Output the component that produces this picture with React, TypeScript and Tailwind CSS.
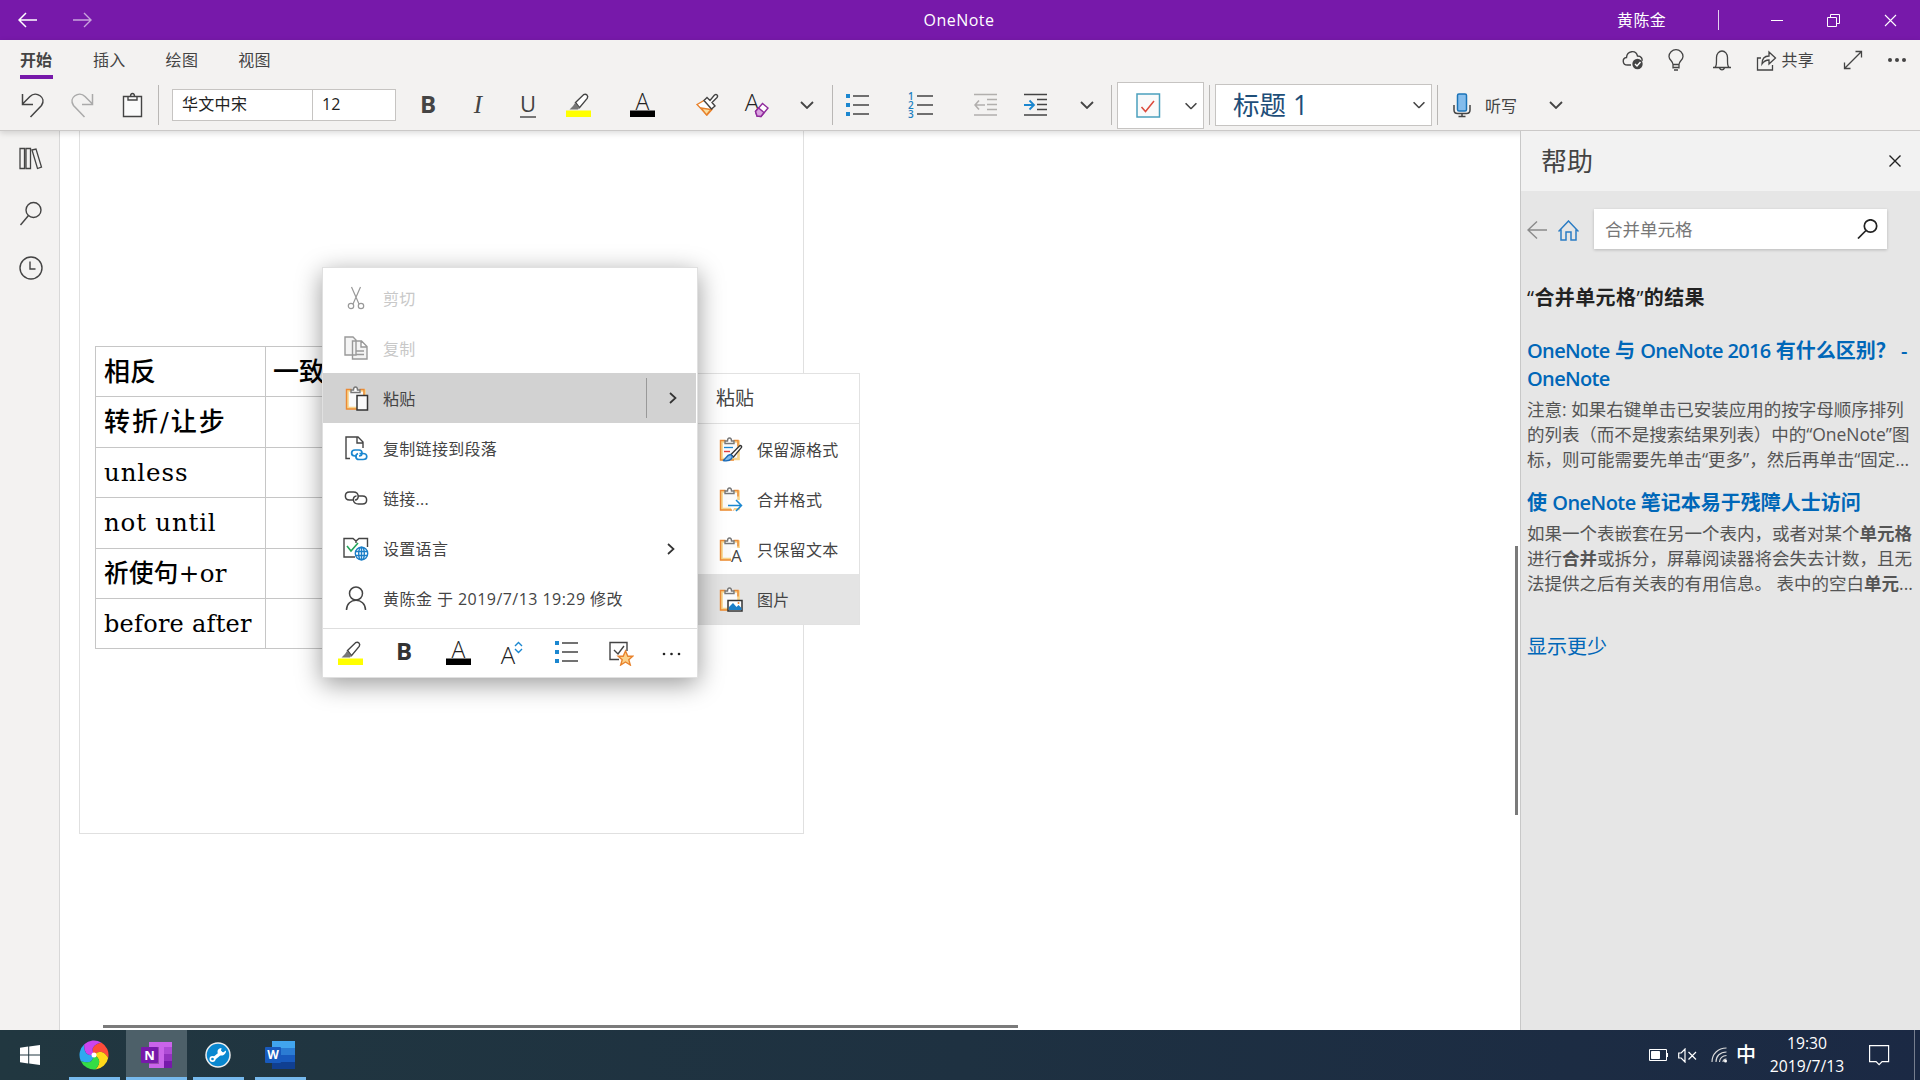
import React from 'react';

const clip = 'M6.5 4.5H2.5V22H19.5V4.5H15.5';

function Chevron({ className = 'text-[#3b3a39]' }: { className?: string }) {
  return (
    <svg className={`shrink-0 ${className}`} width="14" height="8" viewBox="0 0 14 8" fill="none" stroke="currentColor" strokeWidth="1.8">
      <path d="M1 1l6 6 6-6" />
    </svg>
  );
}

function ChevronRight() {
  return (
    <svg width="8" height="12" viewBox="0 0 8 12" fill="none" stroke="#333" strokeWidth="1.7">
      <path d="M1 1l5.5 5L1 11" />
    </svg>
  );
}

function Divider({ className }: { className: string }) {
  return <div className={`w-px h-10 shrink-0 bg-[#b9b7b5] ${className}`} />;
}

function Highlighter() {
  return (
    <svg width="26" height="26" viewBox="0 0 26 26" fill="none">
      <path d="M0 18.5h25v6.5H0z" fill="#ffff00" />
      <path d="M9.5 10.5L17.5 2.7c2.7-1.5 5.3 1 3.7 3.7l-7.7 9.2z" fill="#fff" stroke="#444" strokeWidth="1.4" />
      <path d="M9 11l4.5 4.5-1.5 2H3.5L7 14z" fill="#777" />
    </svg>
  );
}

function FontColor() {
  return (
    <svg className="overflow-visible" width="26" height="26" viewBox="0 0 26 26">
      <text x="12.5" y="17.5" textAnchor="middle" fontSize="23" fontWeight="300" fontFamily="Open Sans, sans-serif" fill="#222">A</text>
      <path d="M0 18.5h25V25H0z" fill="#000" />
    </svg>
  );
}

function Bullets() {
  return (
    <svg width="24" height="24" viewBox="0 0 24 24">
      <path d="M1 1h4v4H1zM1 10h4v4H1zM1 19h4v4H1z" fill="#1b87d0" />
      <path d="M8 3h16M8 12h16M8 21h16" stroke="#444" strokeWidth="1.4" />
    </svg>
  );
}

function Indent({ disabled }: { disabled?: boolean }) {
  const c = disabled ? '#b1afad' : '#444';
  return (
    <svg width="24" height="24" viewBox="0 0 24 24" fill="none" stroke={c} strokeWidth="1.6">
      <path d="M0 1.5h23M13 6.5h10M13 11.5h10M13 16.5h10M0 22h23" />
      {disabled ? <path d="M11 12H1M5 7.5L1 12l4 4.5" /> : <path d="M0 12h10M5.5 7.5L10 12l-4.5 4.5" stroke="#1b87d0" strokeWidth="1.8" />}
    </svg>
  );
}

function Clipboard({ children }: { children?: React.ReactNode }) {
  return (
    <svg className="overflow-visible" width="24" height="25" viewBox="0 0 24 25" fill="none">
      <path d="M2 3.5h17V23H2z" fill="#fafafa" />
      <path d={clip} stroke="#f8d48a" strokeWidth="2.6" />
      <path d="M6.5 3.5H1.5V23H15M14.5 3.5H19v6" stroke="#eb8a35" strokeWidth="1.4" />
      <path d="M6 6.5V4h2.5c0-4 4-4 4 0H15v2.5z" fill="#fff" stroke="#777" strokeWidth="1.4" />
      {children}
    </svg>
  );
}

function TitleBar() {
  return (
    <div className="h-10 shrink-0 bg-[#7719aa] text-white grid grid-cols-[1fr_auto_1fr] items-center text-[16px]">
      <div className="flex items-center pl-[18px]">
        <svg width="20" height="16" viewBox="0 0 20 16" fill="none" stroke="white" strokeWidth="1.5"><path d="M19 8H1M8 1L1 8l7 7" /></svg>
        <svg className="ml-[34px] opacity-60" width="20" height="16" viewBox="0 0 20 16" fill="none" stroke="white" strokeWidth="1.4"><path d="M1 8h18M12 1l7 7-7 7" /></svg>
      </div>
      <span className="tracking-[0.5px] pr-[2px]">OneNote</span>
      <div className="flex items-center justify-end pr-[23px]">
        <span className="mr-[52px] tracking-[0.3px]">黄陈金</span>
        <div className="w-px h-5 bg-white/80 mr-[52px]" />
        <div className="w-3 h-px bg-white mr-[44px]" />
        <svg className="mr-[44px]" width="13" height="13" viewBox="0 0 13 13" fill="none" stroke="white"><path d="M.5 3.5h9v9h-9zM3.5 3V.5h9v9H10" /></svg>
        <svg width="13" height="13" viewBox="0 0 13 13" fill="none" stroke="white" strokeWidth="1.1"><path d="M1 1l11 11M12 1L1 12" /></svg>
      </div>
    </div>
  );
}

function Tabs() {
  return (
    <div className="h-10 shrink-0 flex items-center text-[16px] text-[#444] pl-5">
      <div className="h-[39px] w-[33px] self-start border-b-4 border-[#7719aa] flex items-center justify-center font-bold pt-1 pr-px whitespace-nowrap">开始</div>
      <span className="ml-10 tracking-[0.3px]">插入</span>
      <span className="ml-10 tracking-[0.3px]">绘图</span>
      <span className="ml-10 tracking-[0.3px]">视图</span>
      <div className="ml-auto flex items-center pr-[13px]">
        <svg width="22" height="20" viewBox="0 0 22 20" fill="none" stroke="#444" strokeWidth="1.4">
          <path d="M9 15H5.500C0 15 0 8 4.500 7.500 5 .5 14 -.5 15.500 6c4 0 5 3 4.500 5" />
          <circle cx="15.5" cy="14" r="5.2" fill="#444" stroke="none" />
          <path d="M13 14l2 2 3.500-4" stroke="#fff" />
        </svg>
        <svg className="ml-[23px]" width="18" height="22" viewBox="0 0 18 22" fill="none" stroke="#444" strokeWidth="1.3">
          <path d="M6 15.500C6 12 2 11 2 7.500a7 6.800 0 0 1 14 0C16 11 12 12 12 15.500zM6 18.500h6M7 21h4M6 15.500v4M12 15.500v4" />
        </svg>
        <svg className="ml-[27px]" width="20" height="22" viewBox="0 0 20 22" fill="none" stroke="#444" strokeWidth="1.3">
          <path d="M1 18.500h18M3 18.500c1.500-2 1.500-3 1.500-10a5.500 6.500 0 0 1 11 0c0 7 0 8 1.500 10M7.500 19c1 2.500 4 2.500 5 0" />
        </svg>
        <svg className="ml-6" width="21" height="21" viewBox="0 0 21 21" fill="none" stroke="#444" strokeWidth="1.3">
          <path d="M5 8H1.500v12h15v-5M6 14c0-6 3-8 7-8V2l6.500 6-6.500 6v-4c-3 0-5 1-7 4z" />
        </svg>
        <span className="ml-1 tracking-[0.3px]">共享</span>
        <svg className="ml-[29px]" width="20" height="20" viewBox="0 0 20 20" fill="none" stroke="#444" strokeWidth="1.3">
          <path d="M1.500 18.500l17-17M12.500 1.500h6v6M1.500 12.500v6h6" />
        </svg>
        <svg className="ml-6" width="20" height="6" viewBox="0 0 20 6" fill="#444"><circle cx="3" cy="3" r="2" /><circle cx="10" cy="3" r="2" /><circle cx="17" cy="3" r="2" /></svg>
      </div>
    </div>
  );
}

function Toolbar() {
  return (
    <div className="h-[50px] shrink-0 flex items-center text-[16px] text-[#444]">
      <svg className="ml-[21px]" width="24" height="26" viewBox="0 0 24 26" fill="none" stroke="#444" strokeWidth="1.5"><path d="M1.500 2v10.500H12M1.500 12L9 4.500c6-6 17 1 11.500 9L9.500 25" /></svg>
      <svg className="ml-[25px]" width="24" height="26" viewBox="0 0 24 26" fill="none" stroke="#aaa" strokeWidth="1.5"><path d="M22.500 2v10.500H12M22.500 12L15 4.500c-6-6-17 1-11.500 9L14.500 25" /></svg>
      <svg className="ml-[27px]" width="24" height="26" viewBox="0 0 24 26" fill="#fafafa" stroke="#444" strokeWidth="1.4"><path d="M2.500 4.500h18v20h-18zM7 8V4.500h2.500c0-4 4-4 4 0H16V8z" /></svg>
      <Divider className="ml-[13px]" />
      <div className="ml-[13px] w-[224px] h-8 shrink-0 flex bg-white border border-[#c6c4c2] text-[#222] leading-[29px]">
        <div className="w-[140px] border-r border-[#c6c4c2] pl-[9px] tracking-[0.3px]">华文中宋</div>
        <div className="pl-[9px]">12</div>
      </div>
      <span className="ml-5 w-6 text-center text-[24px] font-bold leading-6 pb-0.5">B</span>
      <span className="ml-[26px] w-6 text-center text-[25px] italic leading-6 font-['Liberation_Serif',serif]">I</span>
      <span className="ml-[26px] w-6 flex justify-center"><span className="w-4 h-[25px] border-b-2 border-[#777] text-center text-[22px] leading-[20px] mt-px">U</span></span>
      <div className="ml-[26px] w-[26px]"><Highlighter /></div>
      <div className="ml-[38px] w-[26px]"><FontColor /></div>
      <svg className="ml-[39px]" width="24" height="24" viewBox="0 0 24 24" fill="none" strokeWidth="1.4">
        <path d="M2 11.500l8-4.500 7 9.500-5 5.500z" fill="#fff" stroke="#e8822c" />
        <path d="M6 15l10 1.500-4.500 5.500z" fill="#fbdf9f" stroke="#e8822c" />
        <path d="M9 7.500l3-3 3 3 4.500-5.500c2-1.500 4 .5 2.500 2.500L17 9.500l3 3.500-3.500 3z" fill="#fff" stroke="#444" />
      </svg>
      <svg className="ml-[25px] overflow-visible" width="26" height="26" viewBox="0 0 26 26" fill="none">
        <text x="8" y="18.500" textAnchor="middle" fontSize="24" fontWeight="300" fontFamily="Open Sans, sans-serif" fill="#222">A</text>
        <path d="M11.500 19.500l7-8 5.500 4.500-7 8.500-4-.5z" fill="#fff" stroke="#8f2a9c" strokeWidth="1.4" />
        <path d="M11.500 19.500l3-3.500 5.500 4.500-3 4-4-.5z" fill="#d9a3df" stroke="#8f2a9c" strokeWidth="1.4" />
      </svg>
      <Chevron className="ml-[30px]" />
      <Divider className="ml-[18px]" />
      <div className="ml-3 w-6"><Bullets /></div>
      <div className="ml-[39px] w-[26px] flex items-center">
        <div className="w-[9px] text-[10px] leading-[9px] font-semibold text-[#1b7fc0]">
          <div>1</div>
          <div>2</div>
          <div>3</div>
        </div>
        <svg width="17" height="24" viewBox="0 0 17 24"><path d="M0 3h16M0 12h16M0 21h16" stroke="#444" strokeWidth="1.4" /></svg>
      </div>
      <div className="ml-10 w-6"><Indent disabled /></div>
      <div className="ml-[26px] w-6"><Indent /></div>
      <Chevron className="ml-8" />
      <Divider className="ml-[17px]" />
      <div className="ml-[5px] w-[87px] h-[47px] shrink-0 bg-white border border-[#c6c4c2] flex items-center pl-[18px]">
        <svg width="25" height="25" viewBox="0 0 25 25" fill="none"><path d="M1 1h22.500v23H1z" fill="#fafafa" stroke="#4ba0bd" strokeWidth="1.5" /><path d="M5.500 14l4 4.500 8.500-10.500" stroke="#dc4a3c" strokeWidth="1.5" /></svg>
        <Chevron className="ml-[23px] mt-0.5 scale-90" />
      </div>
      <Divider className="ml-[5px]" />
      <div className="ml-[5px] w-[217px] h-[42px] shrink-0 bg-white border border-[#c6c4c2] flex items-center justify-between pl-[17px] pr-[5px] text-[#1e4e79]">
        <span className="text-[26.5px] leading-none">标题 1</span>
        <Chevron className="scale-90 text-[#444]" />
      </div>
      <Divider className="ml-[5px]" />
      <svg className="ml-[14px]" width="20" height="26" viewBox="0 0 20 26" fill="none">
        <rect x="5.5" y="2" width="9" height="17" rx="1.5" fill="#83bcec" stroke="#1a73b8" strokeWidth="1.5" />
        <path d="M2 13v5c0 2 1 3.500 3.500 3.500h9c2.500 0 3.500-1.500 3.500-3.500v-5M10 21.500V24M6.500 24.500h7" stroke="#444" strokeWidth="1.5" />
      </svg>
      <span className="ml-[13px] pt-px">听写</span>
      <Chevron className="ml-8" />
    </div>
  );
}

function Sidebar() {
  return (
    <div className="w-[60px] shrink-0 bg-[#f3f2f1] border-r border-[#d8d8d8] flex flex-col items-center pt-4 pl-[2px] gap-[30px]">
      <svg width="24" height="24" viewBox="0 0 24 24" fill="none" stroke="#444" strokeWidth="1.3"><path d="M1 1.500h4.500v20H1zM7 1.500h4.500v20H7zM13 3l4-1 5.500 18-4 1.500z" /></svg>
      <svg width="24" height="25" viewBox="0 0 24 25" fill="none" stroke="#444" strokeWidth="1.4"><circle cx="14.5" cy="9" r="7.5" /><path d="M9.500 14.500L1.500 24" /></svg>
      <svg width="24" height="24" viewBox="0 0 24 24" fill="none" stroke="#444" strokeWidth="1.4"><circle cx="12" cy="12" r="11" /><path d="M11 5.500v7.500h5.500" /></svg>
    </div>
  );
}

const rows = [
  { text: '相反', size: 'text-[26px] font-medium' },
  { text: '转折/让步', size: 'text-[26px] font-medium tracking-[2px]' },
  { text: 'unless', size: 'text-[24.5px] tracking-[0.9px]' },
  { text: 'not until', size: 'text-[24.5px] tracking-[0.8px]' },
  { text: '祈使句+or', size: 'text-[24.5px] font-medium tracking-[0.4px]' },
  { text: 'before after', size: 'text-[24px] tracking-[0.25px]' },
];

function NoteTable() {
  return (
    <div className="ml-[15px] w-[320px] border-t border-l border-[#c6c6c6] text-black font-['DejaVu_Serif','Noto_Sans_CJK_SC',serif]">
      {rows.map((row, i) => (
        <div key={row.text} className={`flex h-[50.4px] border-b border-[#c6c6c6] leading-[50px] ${row.size}`}>
          <div className="w-[170px] border-r border-[#c6c6c6] pl-2 whitespace-nowrap">{row.text}</div>
          <div className="pl-[7px]">{i === 0 ? '一致' : ''}</div>
        </div>
      ))}
    </div>
  );
}

interface ItemProps {
  icon: React.ReactNode;
  label: string;
  className?: string;
  children?: React.ReactNode;
}

function MenuItem({ icon, label, className = 'text-[#444] tracking-[0.3px]', children }: ItemProps) {
  return (
    <div className={`h-[50px] flex items-center pl-5 ${className}`}>
      <div className="w-[26px] flex justify-center">{icon}</div>
      <span className="ml-[14px] pt-[2px]">{label}</span>
      {children}
    </div>
  );
}

function ContextMenu() {
  return (
    <div className="absolute left-[262px] top-[136px] w-[376px] h-[411px] z-20 bg-white border border-[#e0e0e0] pt-[5px] text-[16px] shadow-[0_6px_24px_rgba(0,0,0,0.4)]">
      <MenuItem label="剪切" className="text-[#c8c8c8] tracking-[0.3px]" icon={
        <svg width="20" height="24" viewBox="0 0 20 24" fill="none" stroke="#999" strokeWidth="1.2"><path d="M5.500 1l7.500 17M14.500 1L7 18" /><circle cx="5" cy="20" r="2.7" /><circle cx="15" cy="20" r="2.7" /></svg>
      } />
      <MenuItem label="复制" className="text-[#c8c8c8] tracking-[0.3px]" icon={
        <svg width="24" height="24" viewBox="0 0 24 24" fill="#f4f4f4" stroke="#999" strokeWidth="1.4"><path d="M1 1h8l3 3v15H1zM8.500 5h9l5.500 5.500V23H8.500zM17 5v6h6M12 15h8M12 18.500h8" /></svg>
      } />
      <MenuItem label="粘贴" className="bg-[#d2d2d2] text-[#444] mr-px tracking-[0.3px]" icon={
        <div className="pt-px pl-0.5"><Clipboard><path d="M12 9.500h10.500V24H12z" fill="#fafafa" stroke="#333" strokeWidth="1.5" /></Clipboard></div>
      }>
        <div className="ml-auto w-px h-10 bg-[#999]" />
        <div className="w-[49px] flex justify-center pl-[3px]"><ChevronRight /></div>
      </MenuItem>
      <MenuItem label="复制链接到段落" icon={
        <svg className="mt-px" width="24" height="25" viewBox="0 0 24 25" fill="none" stroke="#444" strokeWidth="1.4">
          <path d="M6 22.500H2V1h12l5 5v6M13 1v6h6" />
          <path d="M13 20h-2c-4.500 0-4.500-6 0-6h4c4 0 4 6 0 6M15.500 17.500H19c5 0 5 6 0 6h-4c-4 0-4-5-1-6" stroke="#1b87d0" strokeWidth="1.7" />
        </svg>
      } />
      <MenuItem label="链接..." icon={
        <svg width="24" height="14" viewBox="0 0 24 14" fill="none" stroke="#444" strokeWidth="1.5"><path d="M9 9H5.500C0 9 0 1 5.500 1h4c6 0 6 8 1.500 8M14 5h4.500c5.500 0 5.500 8 0 8h-4C8 13 8 5 12.500 5" /></svg>
      } />
      <MenuItem label="设置语言" icon={
        <svg className="mt-px" width="26" height="24" viewBox="0 0 26 24" fill="none" stroke="#444" strokeWidth="1.4">
          <path d="M12 20H1V1.500h9l3 2.500 3-2.500h8.500V10M13 4v2" />
          <path d="M4 9l4 5 7-8" stroke="#24a55a" strokeWidth="1.6" />
          <circle cx="18.5" cy="16.5" r="6.2" fill="#fff" stroke="#1b7fc8" />
          <ellipse cx="18.5" cy="16.5" rx="2.8" ry="6.2" stroke="#1b7fc8" />
          <path d="M12.500 14.500h12M12.500 18.500h12M18.500 10v13" stroke="#1b7fc8" />
        </svg>
      }>
        <div className="ml-auto mr-[22px] pt-px"><ChevronRight /></div>
      </MenuItem>
      <MenuItem label="黄陈金 于 2019/7/13 19:29 修改" className="text-[#444] tracking-[0.45px]" icon={
        <svg width="22" height="24" viewBox="0 0 22 24" fill="none" stroke="#444" strokeWidth="1.5"><circle cx="11" cy="7.5" r="6.5" /><path d="M1.500 24c0-13 19-13 19 0" /></svg>
      } />
      <div className="h-[49px] border-t border-[#dedede] mt-[5px] flex items-center justify-between pl-[15px] pr-[16px]">
        <Highlighter />
        <span className="w-[26px] text-center text-[24px] font-bold leading-6 text-[#333] pb-1">B</span>
        <div className="ml-0.5"><FontColor /></div>
        <svg className="overflow-visible" width="26" height="26" viewBox="0 0 26 26" fill="none">
          <text x="9" y="23.5" textAnchor="middle" fontSize="24" fontWeight="300" fontFamily="Open Sans, sans-serif" fill="#222">A</text>
          <path d="M16 6l3.500-3.500L23 6M16 9l3.500 3.500L23 9" stroke="#1b87d0" strokeWidth="1.4" />
        </svg>
        <div className="pb-0.5 ml-0.5"><Bullets /></div>
        <svg className="ml-[3px]" width="26" height="25" viewBox="0 0 26 25" fill="none" stroke="#444" strokeWidth="1.4">
          <path d="M11 18.500H2V1.500h17V10M6 9l4 4 6-8" />
          <path d="M17.500 10l2.300 5.200h5l-4 3.500 1.500 5.300-4.800-3-4.800 3 1.500-5.300-4-3.500h5z" fill="#fbd28a" stroke="#e8822c" />
        </svg>
        <svg width="20" height="5" viewBox="0 0 20 5" fill="#222"><circle cx="3" cy="3" r="1.3" /><circle cx="10.5" cy="3" r="1.3" /><circle cx="18" cy="3" r="1.3" /></svg>
      </div>
    </div>
  );
}

function SubItem({ icon, label, className = '' }: ItemProps) {
  return (
    <div className={`h-[50px] flex items-center pl-[21px] tracking-[0.3px] ${className}`}>
      {icon}
      <span className="ml-[14px] pt-px">{label}</span>
    </div>
  );
}

function PasteMenu() {
  return (
    <div className="absolute left-[638px] top-[242px] w-[162px] h-[252px] z-10 bg-white border border-l-0 border-[#e2e2e2] text-[16px] text-[#444]">
      <div className="h-[50px] border-b border-[#e2e2e2] pl-[18px] text-[19px] leading-[49px]">粘贴</div>
      <SubItem label="保留源格式" icon={
        <Clipboard>
          <path d="M5 10.500h9" stroke="#1b87d0" strokeWidth="1.3" /><path d="M5 14.500h6" stroke="#e03c3c" strokeWidth="1.4" />
          <path d="M12 17.500L21 8.500c1.500 0 2 1 1.500 2L14.500 20z" fill="#fff" stroke="#333" strokeWidth="1.3" />
          <path d="M4 23.500c3-1 3-5.500 7.500-6 4 2 1 7.500-7.500 6z" fill="#83bcec" stroke="#1a6bb8" strokeWidth="1.3" />
        </Clipboard>
      } />
      <SubItem label="合并格式" icon={
        <Clipboard><path d="M8 13h15v8h-8l-1 4" fill="#fff" /><path d="M9 18.500h13M17 13l5.500 5.500-5.500 5.500" stroke="#1b87d0" strokeWidth="1.5" /></Clipboard>
      } />
      <SubItem label="只保留文本" icon={
        <Clipboard><path d="M12 11h11v14H12z" fill="#fff" /><text x="17.5" y="24.500" textAnchor="middle" fontSize="17" fontFamily="Open Sans, sans-serif" fill="#444">A</text></Clipboard>
      } />
      <SubItem label="图片" className="bg-[#e4e4e4]" icon={
        <Clipboard>
          <path d="M9 13.500h14V24H9z" fill="#fff" stroke="#333" strokeWidth="1.5" />
          <path d="M10 23v-3l4-4 3.500 4 2-2 3 3v2z" fill="#1b7fc8" /><circle cx="19.500" cy="16" r="1" fill="#e8822c" />
        </Clipboard>
      } />
    </div>
  );
}

function HelpPane() {
  return (
    <div className="w-[400px] shrink-0 z-20 bg-[#e6e6e6] border-l border-[#c8c8c8] flex flex-col whitespace-nowrap">
      <div className="h-[60px] bg-[#f2f2f2] flex items-center justify-between pl-5 pr-[19px]">
        <span className="text-[26px] text-[#444] pt-px">帮助</span>
        <svg width="12" height="12" viewBox="0 0 12 12" stroke="#222" strokeWidth="1.4"><path d="M.5.5l11 11M11.500.5l-11 11" /></svg>
      </div>
      <div className="mt-[18px] flex items-center pl-[6px]">
        <svg className="mt-0.5" width="21" height="18" viewBox="0 0 21 18" fill="none" stroke="#8a8a8a" strokeWidth="1.4"><path d="M20 9H1M10 .5L1 9l9 8.500" /></svg>
        <svg className="ml-[10px] mt-[3px]" width="21" height="21" viewBox="0 0 21 21" fill="none" stroke="#2b7cc4" strokeWidth="1.5"><path d="M.5 11.500l10-10.500 10 10.500M3 9.500v10.500h5v-8h5v8h5V9.500" /></svg>
        <div className="ml-[15px] w-[293px] h-10 bg-white shadow-[0_1px_3px_rgba(0,0,0,0.2)] flex items-center justify-between pl-[11px] pr-[9px] text-[17.5px] text-[#777]">
          合并单元格
          <svg width="21" height="20" viewBox="0 0 21 20" fill="none" stroke="#222" strokeWidth="1.7"><circle cx="13.500" cy="7" r="6.200" /><path d="M9 11.500L1 19.500" /></svg>
        </div>
      </div>
      <div className="pl-[6px] mt-[35px]">
        <h2 className="text-[20px] leading-7 font-bold text-[#222] tracking-[0.4px]"><span className="font-normal">“</span>合并单元格<span className="font-normal">”</span>的结果</h2>
        <div className="mt-[25px] text-[20px] leading-7 font-semibold text-[#0067b8]">
          <div><span className="tracking-[-0.65px]">OneNote</span> <b className="font-bold">与</b> <span className="tracking-[-0.65px]">OneNote 2016</span> <b className="font-bold">有什么区别？</b> -</div>
          <div className="tracking-[-0.65px]">OneNote</div>
        </div>
        <div className="mt-1 text-[17.5px] leading-[25px] text-[#555]">
          <div>注意: 如果右键单击已安装应用的按字母顺序排列</div>
          <div className="tracking-[-0.05px]">的列表（而不是搜索结果列表）中的“OneNote”图</div>
          <div>标，则可能需要先单击“更多”，然后再单击“固定...</div>
        </div>
        <div className="mt-[17px] text-[20px] leading-7 font-semibold text-[#0067b8]"><b className="font-bold">使</b> <span className="tracking-[-0.55px]">OneNote</span> <b className="font-bold">笔记本易于残障人士访问</b></div>
        <div className="mt-1 text-[17.5px] leading-[25px] text-[#555]">
          <div>如果一个表嵌套在另一个表内，或者对某个<b className="font-bold">单元格</b></div>
          <div>进行<b className="font-bold">合并</b>或拆分，屏幕阅读器将会失去计数，且无</div>
          <div>法提供之后有关表的有用信息。 表中的空白<b className="font-bold">单元</b>...</div>
        </div>
        <div className="mt-[37px] text-[20px] leading-7 text-[#0067b8]">显示更少</div>
      </div>
    </div>
  );
}

const blades = ['#ff4b3a', '#ffd91a', '#35dc45', '#2fa8f0', '#cc44f0'];

function Taskbar() {
  return (
    <div className="h-[50px] shrink-0 z-30 flex items-center bg-linear-to-r from-[#213740] via-[#1e3141] to-[#1b2944] text-white">
      <svg className="ml-5" width="20" height="20" viewBox="0 0 20 20" fill="#fff"><path d="M0 2.800L8.200 1.600v7.900H0zM9.200 1.500L20 0v9.500H9.200zM0 10.500h8.200v7.900L0 17.200zM9.200 10.500H20V20L9.200 18.500z" /></svg>
      <div className="ml-[29px] w-[51px] h-full border-b-[3px] border-[#76b9ed] flex justify-center pt-[10px] pr-[2px]">
        <svg width="30" height="30" viewBox="-15 -15 30 30">
          {blades.map((c, i) => (
            <path key={c} d="M0 0Q6-9 14.500 0A14.500 14.500 0 0 1 4.480 13.790Q10.400 2.920 0 0z" fill={c} transform={`rotate(${i * 72 - 60})`} />
          ))}
          <circle r="2.5" fill="#fff" />
        </svg>
      </div>
      <div className="ml-[6px] w-[61px] h-full bg-[#4d6069] border-b-[3px] border-[#76b9ed] flex justify-center pt-[11px] pr-px">
        <svg width="31" height="28" viewBox="0 0 31 28">
          <path d="M8 1h23v26H8z" fill="#ca64ea" /><path d="M23 6h8v7h-8z" fill="#ae4bd5" /><path d="M23 13h8v7h-8z" fill="#9332bf" /><path d="M23 20h8v7h-8z" fill="#7719aa" />
          <path d="M8 6h10v17H8z" fill="#000" opacity=".25" /><rect y="6" width="17" height="16" rx="1" fill="#7719aa" />
          <text x="8.500" y="18.500" textAnchor="middle" fontSize="13" fontWeight="700" fontFamily="Open Sans, sans-serif" fill="#fff">N</text>
        </svg>
      </div>
      <div className="ml-[6px] w-[51px] h-full border-b-[3px] border-[#76b9ed] flex justify-center pt-3 pr-px">
        <svg width="26" height="26" viewBox="0 0 26 26">
          <circle cx="13" cy="13" r="12" fill="#0a88d0" stroke="#eee" strokeWidth="1.500" />
          <path d="M9 16.500l8-6.500" stroke="#fff" strokeWidth="3.500" /><circle cx="7.500" cy="17" r="2.200" fill="#0a88d0" stroke="#fff" strokeWidth="1.700" />
          <path d="M21 8.500l-3 2-2-1.500.5-3c-4 0-5 4-3 6.500 3 2.500 8 0 7.500-4z" fill="#fff" />
        </svg>
      </div>
      <div className="ml-[11px] w-[51px] h-full border-b-[3px] border-[#76b9ed] flex justify-center pt-[11px] pr-[2px]">
        <svg width="30" height="28" viewBox="0 0 30 28">
          <path d="M7 0h23v7H7z" fill="#41a5ee" /><path d="M7 7h23v7H7z" fill="#2b7cd3" /><path d="M7 14h23v7H7z" fill="#185abd" /><path d="M7 21h23v7H7z" fill="#103f91" />
          <rect y="6" width="16" height="16" rx="1" fill="#185abd" />
          <text x="8" y="18" textAnchor="middle" fontSize="12" fontWeight="700" fontFamily="Open Sans, sans-serif" fill="#fff">W</text>
        </svg>
      </div>
      <div className="ml-auto h-full flex items-center">
        <svg width="20" height="12" viewBox="0 0 20 12" fill="none" stroke="#fff"><path d="M.5.5h17v11H.5zM18.500 4v4" /><path d="M2.500 2.500h8v7h-8z" fill="#fff" /></svg>
        <svg className="ml-[9px]" width="19" height="15" viewBox="0 0 19 15" fill="none" stroke="#fff" strokeWidth="1.200"><path d="M.7 5h2.500L7 1v13l-3.800-4H.7zM10.500 4l7.500 7.500M18 4l-7.500 7.500" /></svg>
        <svg className="ml-[14px]" width="17" height="16" viewBox="0 0 17 16" fill="none" stroke="#ddd" strokeWidth="1.100"><path d="M1 15C1 7 7 1 15.500 1M5 15C5 9 9 5 15.500 5M8.500 15c0-3.500 3-6.500 7-6.500M12 15c0-2 1-3 3.500-3" /><circle cx="14.500" cy="14" r="1.500" fill="#fff" stroke="none" /></svg>
        <span className="ml-2 text-[20px] font-medium">中</span>
        <div className="ml-[13px] w-[76px] text-center text-[15.7px] leading-[23px]">
          <div>19:30</div>
          <div>2019/7/13</div>
        </div>
        <svg className="ml-6" width="21" height="21" viewBox="0 0 21 21" fill="none" stroke="#fff" strokeWidth="1.200"><path d="M.6.600h19v16h-6.500l-3 3-3-3H.6z" /></svg>
        <div className="ml-6 mr-[5px] w-px h-full bg-white/40" />
      </div>
    </div>
  );
}

export default function App() {
  return (
    <div className="w-[1920px] h-[1080px] overflow-hidden flex flex-col bg-white font-['Open_Sans','Noto_Sans_CJK_SC',sans-serif]">
      <TitleBar />
      <div className="z-10 bg-[#f3f2f1] border-b border-[#cbc9c8] shadow-[0_2px_6px_rgba(0,0,0,0.15)]">
        <Tabs />
        <Toolbar />
      </div>
      <div className="flex-1 min-h-0 flex">
        <Sidebar />
        <div className="flex-1 relative overflow-hidden">
          <div className="ml-[19px] w-[725px] h-[703px] border-x border-b border-[#e0e0e0] pt-[215px]">
            <NoteTable />
          </div>
          <ContextMenu />
          <PasteMenu />
          {/* scrollbars */}
          <div className="absolute left-[1455px] top-[415px] w-[3px] h-[269px] bg-[#7a7a7a]" />
          <div className="absolute left-[43px] top-[894px] w-[915px] h-[3px] bg-[#7a7a7a]" />
        </div>
        <HelpPane />
      </div>
      <Taskbar />
    </div>
  );
}
